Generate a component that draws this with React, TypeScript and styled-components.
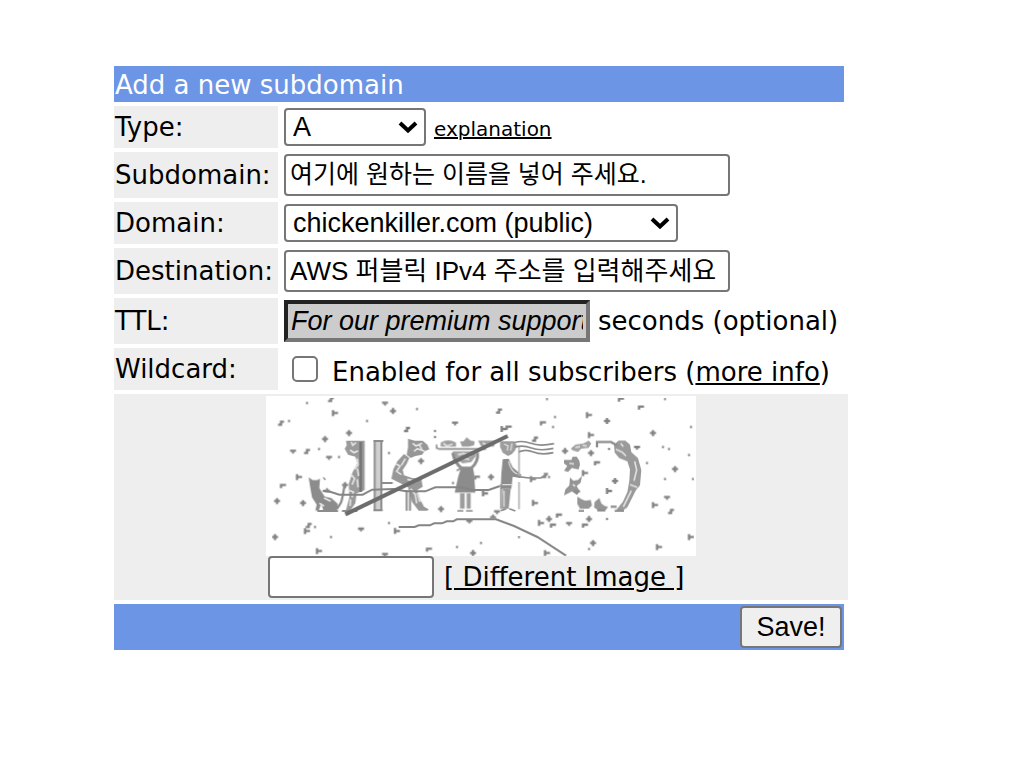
import React from "react";
import styled, { createGlobalStyle, css } from "styled-components";

const GlobalStyle = createGlobalStyle`
  *, *::before, *::after { box-sizing: border-box; }
  body {
    margin: 0;
    background: #fff;
    color: #000;
    font-family: Verdana, "DejaVu Sans", "Noto Sans CJK KR", sans-serif;
    font-size: 26px;
    line-height: 32px;
  }
`;

const Page = styled.main`
  padding: 66px 114px;
`;

const Form = styled.form`
  display: flex;
  flex-direction: column;
  gap: 4px;
  max-width: 734px;
  margin: 0;
`;

const bar = css`
  margin: 0 4px 0 0;
  background: #6c95e6;
`;

const Title = styled.h1`
  ${bar}
  padding: 3px 1px 1px;
  color: #fff;
  font-size: inherit;
  font-weight: normal;
`;

const Footer = styled.div`
  ${bar}
  display: flex;
  justify-content: flex-end;
  padding: 2px;
`;

const Row = styled.div`
  display: grid;
  grid-template-columns: 164px 1fr;
  column-gap: 4px;
`;

const Label = styled.label`
  display: flex;
  align-items: center;
  padding: 0 1px;
  background: #eee;
  white-space: nowrap;
`;

const Field = styled.div<{ $align?: string }>`
  display: flex;
  align-items: ${(p) => p.$align ?? "center"};
  gap: 8px;
  padding: 2px;
  white-space: nowrap;
`;

const control = css`
  margin: 0;
  border: 2px solid #767676;
  border-radius: 4px;
  background: #fff;
  color: #000;
  font-family: "Liberation Sans", Arial, "Noto Sans CJK KR", sans-serif;
`;

const TextInput = styled.input<{ $width: number; $size?: number }>`
  ${control}
  width: ${(p) => p.$width}px;
  height: 42px;
  padding: 0 4px 6px;
  font-size: ${(p) => p.$size ?? 26}px;
`;

const PremiumInput = styled(TextInput)`
  padding: 0 3px;
  border: 4px solid;
  border-color: #222 #767676 #767676 #222;
  border-radius: 0;
  background: #ccc;
  font-style: italic;
`;

const SelectBox = styled.span<{ $width: number }>`
  display: grid;
  align-items: center;
  width: ${(p) => p.$width}px;

  & > * {
    grid-area: 1 / 1;
  }

  & > svg {
    justify-self: end;
    margin-right: 8px;
    pointer-events: none;
  }
`;

const Select = styled.select`
  ${control}
  appearance: none;
  width: 100%;
  height: 38px;
  padding: 0 32px 0 7px;
  font-size: 27px;
`;

const Checkbox = styled.input`
  appearance: none;
  width: 26px;
  height: 26px;
  margin: 0 6px 0 8px;
  border: 2px solid #767676;
  border-radius: 5px;
  background: #fff;

  &:checked {
    background: #0075ff;
  }
`;

const Link = styled.a<{ $small?: boolean }>`
  color: #000;
  font-size: ${(p) => (p.$small ? 20 : 26)}px;
  text-decoration: underline;
`;

const Note = styled.span`
  padding-top: 6px;
`;

const Captcha = styled.div`
  display: flex;
  flex-direction: column;
  align-items: center;
  padding: 2px;
  background: #eee;
`;

const CaptchaLine = styled.div`
  display: flex;
  align-items: center;
  gap: 10px;
  width: 430px;
  padding: 0 2px;
  white-space: pre;
`;

const Picture = styled.svg`
  display: block;
  width: 430px;
  height: 160px;
  background: #fff;
`;

const SaveButton = styled.button`
  ${control}
  width: 102px;
  height: 42px;
  padding: 0;
  background: #efefef;
  font-size: 27px;
`;

const Arrow = () => (
  <svg width="20" height="12" viewBox="0 0 20 12" aria-hidden="true">
    <path d="M2 2l8 7.5L18 2" fill="none" stroke="#000" strokeWidth="4" />
  </svg>
);

type Point = [number, number];

const speckPaths: Record<string, string> = {
  dot: "M-3 0h6",
  plus: "M-9 0h18M0 -9v18",
  tee: "M-6 -9v18M-6 0h15",
  zig: "M-9 6h9v-9h9",
  corner: "M-6 6v-9h15",
  down: "M-9 -3h18M-3 2h6",
  up: "M-9 3h18M-3 -2h6",
};

const specks: Record<string, Point[]> = {
  dot: [
    [153, 39], [483, 57], [333, 93], [99, 93], [399, 189], [189, 177], [249, 201],
    [537, 123], [537, 141], [177, 411], [225, 441], [399, 399], [603, 471], [675, 459],
    [591, 279], [873, 27], [1227, 27], [897, 81], [891, 111], [1305, 111], [1221, 171],
    [1239, 177], [1299, 195], [1173, 219], [1227, 267], [1311, 267], [1059, 177],
    [879, 261], [1053, 387], [789, 441], [675, 459], [999, 477],
  ].filter(([x, y], i, all) => all.findIndex(([a, b]) => a === x && b === y) === i) as Point[],
  plus: [
    [411, 63], [207, 147], [279, 129], [495, 213], [63, 333], [141, 339], [57, 441],
    [555, 357], [651, 489], [267, 285], [1053, 93], [1191, 129], [927, 183], [1005, 189],
    [705, 261], [1257, 237], [1077, 273], [879, 387], [999, 387], [1011, 459],
  ],
  tee: [
    [237, 69], [129, 261], [153, 423], [189, 483], [423, 423], [687, 310], [999, 75],
    [1005, 135], [743, 117], [987, 249], [831, 267], [1059, 303], [837, 339], [1197, 345],
    [855, 399], [873, 489], [1209, 471], [1305, 441],
  ],
  zig: [
    [225, 27], [75, 98], [153, 183], [453, 117], [158, 405], [729, 62], [837, 146],
    [867, 255], [1245, 363],
  ],
  corner: [
    [81, 288], [519, 479], [663, 263], [1095, 29], [1155, 53], [861, 100], [758, 113],
    [1023, 220], [909, 377], [891, 407], [987, 407],
  ],
  down: [
    [387, 41], [597, 101], [111, 185], [219, 204], [315, 419], [387, 495], [640, 395],
    [1143, 174], [1233, 324], [723, 367], [939, 402], [963, 307],
  ],
  up: [[213, 300], [711, 379]],
};

const CaptchaPicture = () => (
  <Picture viewBox="30 18 1290 480" role="img" aria-label="Verification image">
    <filter id="soft" x="0" y="0" width="1" height="1">
      <feGaussianBlur stdDeviation="2" />
    </filter>
    <g fill="none" stroke="#828282" strokeWidth="7" filter="url(#soft)">
      {Object.entries(specks).flatMap(([kind, points]) =>
        points.map(([x, y]) => (
          <path key={`${kind}-${x}-${y}`} d={speckPaths[kind]} transform={`translate(${x} ${y})`} />
        ))
      )}
    </g>

    <g filter="url(#soft)">
      {/* cat beside a standing woman */}
      <g fill="#8c8c8c">
        <path d="M158 262l12 8h14l8-4-2 28 16 26 20 4 18 16 4 16-14 8-32-2-6-22-8 22h-10l4-18-14-22-6-34z" />
        <path d="M270 152h56v148l-24 10-4 30-14 20h-14l10-38-2-40 12-36 14-26-6-20-22-6-10-18 6-10z" opacity=".88" />
      </g>
      <g fill="none" stroke="#8c8c8c">
        <path d="M238 358c22-14 20-36 28-72" strokeWidth="7" />
        <path d="M184 363h62M258 363h46" strokeWidth="6" />
        <path d="M314 156v150" stroke="#747474" strokeWidth="8" />
        <path d="M202 262l6 8" strokeWidth="4" />
      </g>
      <g fill="none" stroke="#e4e4e4" strokeWidth="5">
        <path d="M286 156l4 10 10-8M282 180l12 8 12-6M304 206l2 18-10 14M284 252l12 14-8 18M304 236l4 22M190 340l14 8M276 300l16 6-4 16M304 268l2 24M284 328l-2 20M204 324l20 10" />
      </g>

      {/* bench post and seated reader */}
      <g fill="none" stroke="#8c8c8c">
        <path d="M365 152v210" stroke="#cfcfcf" strokeWidth="16" />
        <path d="M356 152v210M376 150v212M352 153h30M352 361h28M376 279h34" strokeWidth="6" />
        <path d="M452 300v62M462 300v62" strokeWidth="6" />
      </g>
      <g fill="#8c8c8c">
        <path d="M456 146l20 6h24l14 12 6 14-14 6-8 10-20 4-14 6-12-10 4-22z" opacity=".9" />
        <path d="M444 192l16 12-8 18-12 18 4 16 24 8 28 2 4 24-16 10 8 28 12 22 14 8-4 4h-26l-20-26-12-44-26-14-24-12 6-28 12-24z" opacity=".9" />
      </g>
      <g fill="none" stroke="#e4e4e4" strokeWidth="5">
        <path d="M470 160l10 8 18-8M474 184l10-8 22 8M420 222l12 6-10 16 14 10M448 206l-12 20M454 268l26 6M464 296l14 18 4 26M484 308l8 28M490 164l8 16" />
      </g>

      {/* girl carrying a tray on her head */}
      <g fill="#8c8c8c">
        <path d="M554 158q22-14 46 0v12h-46zM612 154h10l10-12 12 10 12 2-2 12-16 4h-20zM666 152h52l-4 18h-38z" opacity=".85" />
        <path d="M590 184h70l-2 16-12 16-26 4-20-12z" opacity=".8" />
        <path d="M616 230h34l4 20 4 58h-62l10-46z" />
        <path d="M612 310h14v46h-14zM632 310h12v46h-12z" opacity=".85" />
      </g>
      <g fill="none" stroke="#8c8c8c">
        <path d="M542 164v10l8 3h140" strokeWidth="5" />
        <path d="M590 188q6 30 26 46M664 188q4 28-18 46" strokeWidth="9" />
        <path d="M604 363h18M630 363h20M602 242l12-6" strokeWidth="5" />
      </g>
      <path d="M562 160l10 8 18-6M680 158l12 8 14-6M606 194l16-4 22 8M604 208l12-4 24 4" fill="none" stroke="#e4e4e4" strokeWidth="5" />

      {/* man holding a striped flag */}
      <g fill="#8c8c8c">
        <path d="M732 154h42l8 12-4 14-10 12-12 6-16-10-8-18z" opacity=".85" />
        <path d="M740 208l18-2 12 26 26 22-4 10-22-4-4 36h-32l2-46z" />
        <path d="M740 296h24l-6 60h-20z" opacity=".9" />
      </g>
      <g fill="none" stroke="#8c8c8c">
        <path d="M789 170v90M789 276v82" stroke="#b4b4b4" strokeWidth="5" />
        <path d="M774 158q24-8 50 2t70 1M776 172q24-8 50 2t66 1M788 186q20-10 44 0t60 2" strokeWidth="5" />
        <path d="M786 260l34 4h34l18-10M734 362l16-5M760 356l18 7M735 282v74" strokeWidth="5" />
      </g>
      <path d="M758 214q6 30 26 38M744 162l12 6-2 14M768 160l-4 22M744 302v48M738 284h28" fill="none" stroke="#dedede" strokeWidth="4" />

      {/* wreath closed by a bending figure */}
      <g fill="#8c8c8c">
        <path d="M944 176l14-12 24-4 16-8 8 8-8 14-22 2-10 10-14-4z" opacity=".8" />
        <path d="M924 210h22l4-10h12l8 12 2 12-4 14-12-2-8-2-12 12-12-4 10-14-10-8z" opacity=".92" />
        <path d="M942 262l10 10 14-2 12-12-4 20-12 10 8 14-8 12-14-10-24 12 4-18 12-12z" opacity=".92" />
        <path d="M964 320l14 8 10 4 16-2 4 16-10 10h-26l-8-14zM1016 336l14-12 6 16 10 8 10 2-6 10-22 2-14-10z" opacity=".92" />
        <path d="M1074 164l14-12h20l14 12 4 22 20 18 10 36-4 46-12 14-26 52-14 10-20-2 20-24 14-30 6-34 2-34-8-24-24-10-14-16z" opacity=".88" />
      </g>
      <g fill="none" stroke="#8c8c8c" strokeWidth="7">
        <path d="M1023 172v-16h42l18 10M1064 350h18M968 363h16M1024 361h24M1076 363h28" />
      </g>
      <path d="M1080 178l18 8 12 12M1136 214l6 26-8 32M1122 284l22 8M1126 302l-24 48M958 172l14-2M980 166l12 2M940 220l14 2M950 284l8 4M1094 160l8 10" fill="none" stroke="#e0e0e0" strokeWidth="5" />
    </g>

    {/* strokes crossing the picture */}
    <g fill="none">
      <path d="M200 302l25 4 25 8h70l28-15 64-2 38 7h58l30-12h76l34 8h50l34-12" stroke="#858585" strokeWidth="6" />
      <path d="M428 411h48l12-5h34l12-6h24l14-6h20l10-6h118l54 20 70 33 86 56" stroke="#858585" strokeWidth="6" />
      <path d="M268 373L755 138" stroke="#6c6c6c" strokeWidth="12" />
    </g>
  </Picture>
);

export default function App() {
  return (
    <>
      <GlobalStyle />
      <Page>
        <Form onSubmit={(e: React.FormEvent) => e.preventDefault()}>
          <Title>Add a new subdomain</Title>
          <Row>
            <Label htmlFor="type">Type:</Label>
            <Field $align="baseline">
              <SelectBox $width={142}>
                <Select id="type">
                  <option>A</option>
                </Select>
                <Arrow />
              </SelectBox>
              <Link $small href="#explanation">explanation</Link>
            </Field>
          </Row>
          <Row>
            <Label htmlFor="subdomain">Subdomain:</Label>
            <Field>
              <TextInput id="subdomain" type="text" $width={446} $size={25} defaultValue="여기에 원하는 이름을 넣어 주세요." />
            </Field>
          </Row>
          <Row>
            <Label htmlFor="domain">Domain:</Label>
            <Field>
              <SelectBox $width={394}>
                <Select id="domain">
                  <option>chickenkiller.com (public)</option>
                </Select>
                <Arrow />
              </SelectBox>
            </Field>
          </Row>
          <Row>
            <Label htmlFor="destination">Destination:</Label>
            <Field>
              <TextInput id="destination" type="text" $width={446} defaultValue="AWS 퍼블릭 IPv4 주소를 입력해주세요" />
            </Field>
          </Row>
          <Row>
            <Label htmlFor="ttl">TTL:</Label>
            <Field>
              <PremiumInput id="ttl" type="text" readOnly $width={306} $size={27} defaultValue="For our premium supporters" />
              <span>seconds (optional)</span>
            </Field>
          </Row>
          <Row>
            <Label htmlFor="wildcard">Wildcard:</Label>
            <Field>
              <Checkbox id="wildcard" type="checkbox" />
              <Note>
                Enabled for all subscribers (<Link href="#more-info">more info</Link>)
              </Note>
            </Field>
          </Row>
          <Captcha>
            <CaptchaPicture />
            <CaptchaLine>
              <TextInput type="text" aria-label="Verification code" $width={166} />
              <Link href="#different-image">[ Different Image ]</Link>
            </CaptchaLine>
          </Captcha>
          <Footer>
            <SaveButton type="submit">Save!</SaveButton>
          </Footer>
        </Form>
      </Page>
    </>
  );
}
